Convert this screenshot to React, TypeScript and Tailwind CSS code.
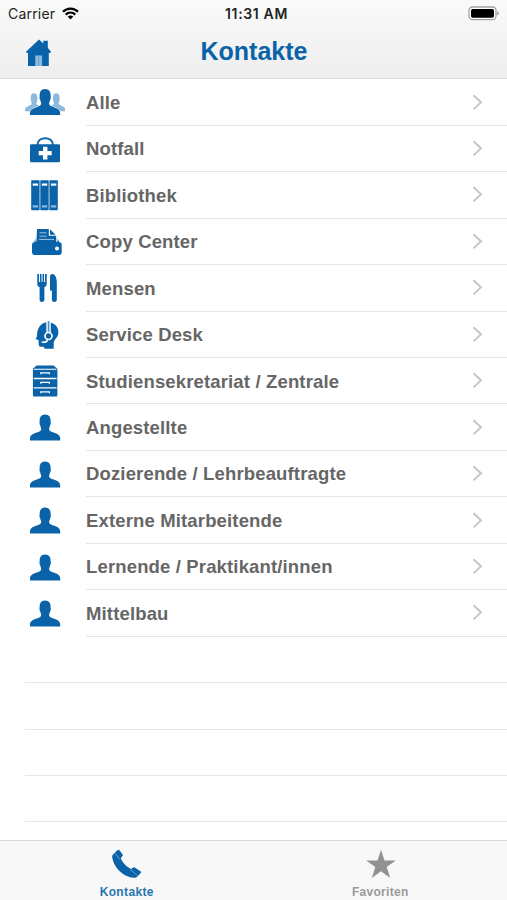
import type { ReactNode } from "react";

const BLUE = "#0a63a9";
const LIGHT = "#8db9de";

const PERSON =
  "M5 36v-1.800c0-3 2.400-4.600 6-5.800 3.400-1.100 5.200-1.800 5.200-3.800 0-1.200-.8-2.100-1-3.800-.7-.5-1-2.700-.5-3.100C14.300 13 16 10 20.100 10s5.900 3 5.500 7.700c.5.400.3 2.600-.5 3.100-.2 1.700-1 2.600-1 3.800 0 2 1.800 2.700 5.200 3.800 3.600 1.200 5.900 2.800 5.900 5.800V36z";

const Icon = ({ children }: { children: ReactNode }) => (
  <svg width="40" height="46" viewBox="0 0 40 46" fill={BLUE} className="shrink-0">
    {children}
  </svg>
);

const PersonIcon = () => (
  <Icon>
    <g transform="translate(0 .4)">
      <path d={PERSON} />
    </g>
  </Icon>
);

const GroupIcon = () => (
  <Icon>
    <path d={PERSON} fill={LIGHT} transform="translate(-3 7.400) scale(.6 .69)" />
    <path d={PERSON} fill={LIGHT} transform="translate(19.200 7.400) scale(.6 .69)" />
    <path d={PERSON} stroke="#fff" strokeWidth="1" paintOrder="stroke" />
  </Icon>
);

const CaseIcon = () => (
  <Icon>
    <path d="M12.500 19.500v-1c0-8.500 15.400-8.500 15.400 0v1" fill="none" stroke={BLUE} strokeWidth="2" />
    <rect x="5" y="18.300" width="30" height="17.900" rx="1.300" />
    <path d="M18 20.800h4.400v4.100h4.300v4.400h-4.300v4.200H18v-4.200h-4.300v-4.400H18z" fill="#fff" />
  </Icon>
);

const BooksIcon = () => (
  <Icon>
    {[6.2, 15.3, 24.4].map((x) => (
      <g key={x}>
        <rect x={x} y="8.200" width="8.400" height="30" rx=".6" />
        <rect x={x + 1.5} y="11.500" width="5.400" height="2.200" fill="#fff" />
        <rect x={x + 1.5} y="33.300" width="5.400" height="2.200" fill={LIGHT} />
      </g>
    ))}
  </Icon>
);

const PrinterIcon = () => (
  <Icon>
    <path d="M12 10h11.800v6.800h7.400v6.400h-19.800z" />
    <path d="M25 10.200l5.600 5.600H25z" />
    <path d="M14.500 13.800h7M14.500 17.200h7M14 20.400h15" stroke="#9fc3e0" strokeWidth="1" />
    <path d="M10.500 19.500L8.500 25h26.500l-2.500-5.500v3.300h-22z" />
    <rect x="7" y="23.300" width="29.700" height="12.600" rx="2.300" />
    <circle cx="32" cy="29.600" r="2" fill="#fff" />
  </Icon>
);

const CutleryIcon = () => (
  <Icon>
    <path d="M12.300 9h1.700v8h1V9h1.500v8h1V9H19v8h1V9h1.700v10c0 1.700-.9 2.700-2.300 3.100v12.700c0 3-4.800 3-4.800 0V22.100c-1.400-.4-2.300-1.400-2.300-3.100z" />
    <path d="M25 11.500c0-4 6.800-4 6.800 6v17.300c0 3-4.900 3-4.900 0V25.500H25z" />
  </Icon>
);

const ServiceIcon = () => (
  <Icon>
    <path d="M21.500 10.300c7-.5 11.900 3.800 11.900 10.200 0 4.500-3.600 6.400-4.700 9.700v6.600l-8.900-.1-1.200-2c-2.600.4-4.600.1-4.800-1.800l-.3-4.800-2.900-1 1.400-2.900c-.1-8.400 4.200-13.400 9.500-13.900z" />
    <path d="M21.300 9h4.500v11.500h-4.500z" fill="#fff" />
    <path d="M23.550 9v11" stroke="#4e90c3" strokeWidth="1.700" />
    <circle cx="23.500" cy="24" r="3.500" fill={BLUE} stroke="#fff" strokeWidth="1.700" />
    <path d="M22.500 28c-.4 2.300-2.400 2.500-5.800 2.300" fill="none" stroke="#fff" strokeWidth="1.500" />
  </Icon>
);

const CabinetIcon = () => (
  <Icon>
    <path d="M11.500 7.500h17.200l3.500 3.300H8z" />
    {[11.7, 21.2, 30.6].map((y) => (
      <g key={y}>
        <rect x="8" y={y} width="24.200" height="8" rx=".5" />
        <path d={`M15.800 ${y + 4.6}v-1.400h8.600v1.400`} fill="none" stroke="#fff" strokeWidth="1.200" />
      </g>
    ))}
    <path d="M8.400 10v27M31.800 10v27" stroke={BLUE} strokeWidth=".8" />
  </Icon>
);

const HomeIcon = () => (
  <svg width="26" height="28" viewBox="0 0 26 28" fill={BLUE}>
    <path d="M13 .5l4.300 4V1.800h4.500v7l3.200 4-1 1.200h-1.200V27H2v-13H.8l-.8-1.200z" />
    <path d="M9.300 27V16.500h6.800V27z" fill={LIGHT} />
    <path d="M12.700 17v10" stroke="#6ba3d0" strokeWidth=".9" />
  </svg>
);

const items = [
  { label: "Alle", icon: <GroupIcon /> },
  { label: "Notfall", icon: <CaseIcon /> },
  { label: "Bibliothek", icon: <BooksIcon /> },
  { label: "Copy Center", icon: <PrinterIcon /> },
  { label: "Mensen", icon: <CutleryIcon /> },
  { label: "Service Desk", icon: <ServiceIcon /> },
  { label: "Studiensekretariat / Zentrale", icon: <CabinetIcon /> },
  { label: "Angestellte", icon: <PersonIcon /> },
  { label: "Dozierende / Lehrbeauftragte", icon: <PersonIcon /> },
  { label: "Externe Mitarbeitende", icon: <PersonIcon /> },
  { label: "Lernende / Praktikant/innen", icon: <PersonIcon /> },
  { label: "Mittelbau", icon: <PersonIcon /> },
];

const Header = () => (
  <header className="h-[79.400px] shrink-0 border-b border-[#dedede] bg-linear-to-b from-[#fafafa] to-[#eeeeee]">
    <div className="grid h-[27px] grid-cols-[1fr_auto_1fr] items-center pl-2 pr-[8px] font-['Inter'] text-[14px] text-[#222]">
      <div className="flex items-center gap-[7px]">
        <span className="tracking-[0.200px]">Carrier</span>
        <svg width="17" height="13" viewBox="0 0 17 13" fill="none" stroke="#000" strokeWidth="2.300">
          <path d="M1 4.800c4.200-4.300 10.800-4.300 15 0M3.700 7.700c2.800-2.700 6.800-2.700 9.600 0" />
          <path d="M8.500 12.600l-2.800-3c1.600-1.400 4-1.400 5.600 0z" fill="#000" stroke="none" />
        </svg>
      </div>
      <span className="whitespace-nowrap pl-[6px] text-center font-semibold tracking-[0.650px]">11:31 AM</span>
      <svg width="31" height="15" viewBox="0 0 31 15" className="justify-self-end">
        <rect x="1" y="1" width="27" height="12.600" rx="3.500" fill="#fff" stroke="#a2a2a2" strokeWidth="1.300" />
        <rect x="3" y="2.900" width="23" height="8.800" rx="1.700" />
        <path d="M29.300 5.200c1.800.6 1.800 3.600 0 4.200z" fill="#888" />
      </svg>
    </div>
    <div className="grid h-[50px] grid-cols-[1fr_auto_1fr] items-center">
      <button className="pl-[26px] pt-[2px]">
        <HomeIcon />
      </button>
      <h1 className="pb-[2px] pl-px text-[25px] font-bold leading-none text-[#0a63a9]">Kontakte</h1>
    </div>
  </header>
);

const App = () => {
  return (
    <div className="flex h-[900px] w-[507px] flex-col overflow-hidden bg-white font-['Liberation_Sans',sans-serif]">
      <Header />
      <main className="min-h-0 flex-1 overflow-hidden">
        {items.map((item) => (
          <div key={item.label} className="flex h-[46.440px] pl-[25px]">
            {item.icon}
            <div className="ml-[20.500px] flex flex-1 items-center justify-between border-b border-[#e6e6e6] pr-[24px]">
              <span className="whitespace-nowrap pl-[0.500px] pt-[1.500px] text-[18.500px] font-bold tracking-[0.150px] text-[#666]">
                {item.label}
              </span>
              <svg width="11" height="17" viewBox="0 0 11 17" fill="none" stroke="#c5c5c8" strokeWidth="1.900">
                <path d="M1.500 1.200L9 8.300l-7.500 7.100" />
              </svg>
            </div>
          </div>
        ))}
        {[1, 2, 3, 4].map((n) => (
          <div key={n} className="ml-[25px] h-[46.440px] border-b border-[#e6e6e6]" />
        ))}
      </main>
      <nav className="grid h-[60px] shrink-0 grid-cols-2 border-t border-[#d8d8d8] bg-[#f8f8f8] text-[12px] font-bold leading-none">
        <button className="flex flex-col items-center pt-[8px] text-[#2874b2]">
          <svg width="30" height="30" viewBox="0 0 30 30" fill={BLUE}>
            <path d="M1 5.500L5.700 1c.6-.5 1.200-.4 1.700.2l3.300 4.300c.4.600.3 1.100-.2 1.600L8.800 9c1.400 4.500 5.500 8.600 10.400 11.100l2-1.600c.5-.4 1-.4 1.500 0l5.800 3.800c.7.500.7 1 .2 1.600l-3.500 3.900c-.8.8-1.800 1.100-3.100 1C11.500 28.500 1.600 18.500.3 8.600.1 7.300.2 6.300 1 5.500z" />
            <path d="M3 4.300l5 6.300M18 20.400l7.500 6.300" stroke="#8db9de" strokeWidth=".7" />
          </svg>
          <span className="mt-[7px] tracking-[0.350px]">Kontakte</span>
        </button>
        <button className="flex flex-col items-center pt-[8px] text-[#9b9b9b]">
          <svg width="30" height="30" viewBox="0 0 30 30" fill="#929292" className="ml-px">
            <path d="M15 .7l3.500 10.700h11.300l-9.100 6.700 3.500 10.800L15 22.300l-9.200 6.600 3.500-10.800L.2 11.400h11.300z" />
          </svg>
          <span className="mt-[7px] tracking-[0.300px]">Favoriten</span>
        </button>
      </nav>
    </div>
  );
};

export default App;
